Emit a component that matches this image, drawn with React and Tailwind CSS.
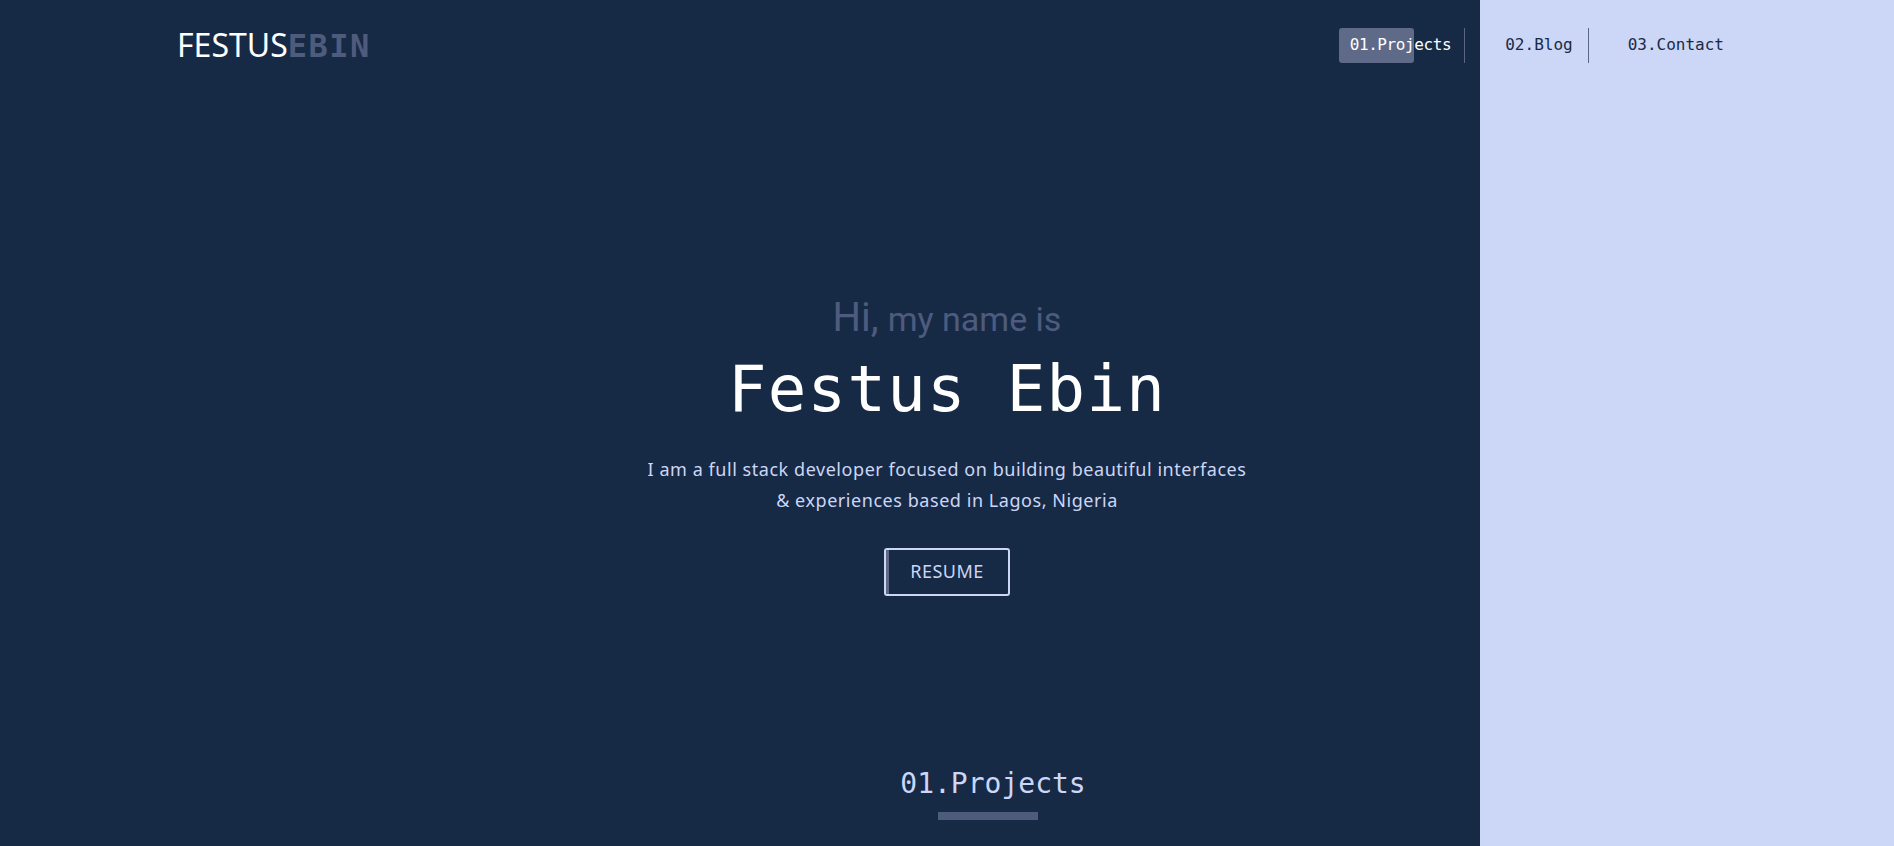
import React from "react";

const mono = "font-['DejaVu_Sans_Mono',monospace]";

const Header = () => (
  <header className="flex h-[90px] items-center justify-between pl-[177px] pr-[159px]">
    <a href="#" className="flex items-baseline text-[32px] leading-none">
      <span className="font-['Noto_Sans',sans-serif] text-white">FESTUS</span>
      <span className={`${mono} font-bold tracking-[1.5px] text-[#4f5b7d]`}>EBIN</span>
    </a>

    <nav className={`${mono} flex items-center text-[16px]`}>
      {/* active link, pill sits behind half of it */}
      <a href="#projects" className="relative flex h-[35px] items-center pl-[11px] pr-[13px] text-white">
        <span className="absolute inset-y-0 left-0 w-[75px] rounded-[3px] bg-[#5f6a88]" />
        <span className="relative tracking-[-0.4px]">01.Projects</span>
      </a>
      <span className="h-[35px] w-px bg-[#5b6682]" />
      <a href="#blog" className="ml-[29px] flex h-[35px] items-center px-[11px] text-[#172a45]">
        02.Blog
      </a>
      <span className="ml-[4px] h-[35px] w-px bg-[#5b6682]" />
      <a href="#contact" className="ml-[28px] flex h-[35px] items-center px-[11px] text-[#172a45]">
        03.Contact
      </a>
    </nav>
  </header>
);

const Hero = () => (
  <section className="flex flex-col items-center pt-[204px] text-center">
    <p className="font-['Roboto',sans-serif] leading-[1.2] text-[#4e5b7e]">
      <span className="text-[40px]">Hi,</span>
      <span className="ml-[9px] text-[34px]">my name is</span>
    </p>

    <h1 className={`${mono} mt-[9px] text-[64px] leading-[1.2] tracking-[1.3px] text-white`}>
      Festus Ebin
    </h1>

    <p className="mt-[26px] font-['Noto_Sans',sans-serif] text-[18px] leading-[31px] tracking-[0.55px] text-[#ccd6f6]">
      I am a full stack developer focused on building beautiful interfaces
      <br />
      &amp; experiences based in Lagos, Nigeria
    </p>

    <button className="relative mt-[32px] h-[48px] w-[126px] overflow-hidden rounded-[3px] border-2 border-[#ccd6f6] font-['Noto_Sans',sans-serif] text-[18px] tracking-[0.5px] text-[#ccd6f6]">
      <span className="absolute inset-y-0 left-0 w-[3px] bg-[#5f6a88]" />
      RESUME
    </button>
  </section>
);

const Projects = () => (
  <section id="projects" className="flex flex-col items-center pl-[92px] pt-[171px]">
    <h2 className={`${mono} text-[28px] leading-[1.2] text-[#ccd6f6]`}>01.Projects</h2>
    <div className="mt-[12px] mr-[10px] h-[8px] w-[100px] bg-[#4f5b7d]" />
  </section>
);

export default function App() {
  return (
    <div className="min-h-screen bg-[linear-gradient(to_left,#ccd6f6_414px,#172a45_414px)]">
      <Header />
      <Hero />
      <Projects />
    </div>
  );
}
